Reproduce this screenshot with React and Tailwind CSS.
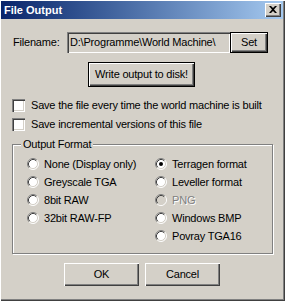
import React from "react";

const Radio = ({ checked, disabled }) => (
  <svg width="12" height="12" viewBox="0 0 12 12" className="shrink-0">
    <circle cx="6" cy="6" r="5" fill={disabled ? "#d4d0c8" : "#fff"} />
    <path d="M2.11 9.89A5.5 5.5 0 0 1 9.89 2.11" stroke="#808080" fill="none" />
    <path d="M9.89 2.11A5.5 5.5 0 0 1 2.11 9.89" stroke="#fff" fill="none" />
    <path d="M2.82 9.18A4.5 4.5 0 0 1 9.18 2.82" stroke="#404040" fill="none" />
    <path d="M9.18 2.82A4.5 4.5 0 0 1 2.82 9.18" stroke="#d4d0c8" fill="none" />
    {checked && <circle cx="6" cy="6" r="2" fill="#000" />}
  </svg>
);

const RadioItem = ({ label, checked, disabled }) => (
  <div className="flex h-[18px] items-center gap-[5px]">
    <Radio checked={checked} disabled={disabled} />
    <span
      className={
        disabled
          ? "text-[#808080] [text-shadow:1px_1px_0_#fff]"
          : "text-black"
      }
    >
      {label}
    </span>
  </div>
);

const Checkbox = ({ label }) => (
  <div className="flex h-[13px] items-center gap-[6px]">
    <div className="h-[13px] w-[13px] shrink-0 bg-white shadow-[inset_1px_1px_0_#808080,inset_2px_2px_0_#404040,inset_-1px_-1px_0_#ffffff,inset_-2px_-2px_0_#d4d0c8]" />
    <span>{label}</span>
  </div>
);

export default function App() {
  return (
    <div className="relative flex h-[301px] w-[285px] flex-col bg-[#d4d0c8] font-['Liberation_Sans',Arial,sans-serif] text-[11px] tracking-[-0.2px] text-black shadow-[inset_1px_1px_0_#ffffff,inset_-1px_-1px_0_#404040,inset_-2px_-2px_0_#808080]">
      {/* Title bar */}
      <div className="ml-[1px] mr-[2px] mt-[1px] flex h-[18px] items-center justify-between bg-gradient-to-r from-[#0a246a] to-[#a6caf0] pl-[3px] pr-[2px]">
        <span className="text-[11px] font-bold tracking-normal text-white">File Output</span>
        <div className="flex h-[14px] w-[16px] items-center justify-center bg-[#d4d0c8] shadow-[inset_1px_1px_0_#ffffff,inset_-1px_-1px_0_#404040,inset_-2px_-2px_0_#808080]">
          <svg width="8" height="7" viewBox="0 0 8 7" className="mt-[-1px]">
            <path d="M0 0h2l2 2 2-2h2L5 3.5 8 7H6L4 5 2 7H0l3-3.5z" fill="#000" />
          </svg>
        </div>
      </div>

      {/* Filename row */}
      <div className="mt-[13px] flex items-center pl-[13px]">
        <span className="w-[54px]">Filename:</span>
        <div className="flex h-[21px] w-[163px] items-center overflow-hidden whitespace-nowrap bg-[#d4d0c8] pl-[3px] shadow-[inset_1px_1px_0_#808080,inset_2px_2px_0_#404040,inset_-1px_-1px_0_#ffffff,inset_-2px_-2px_0_#d4d0c8]">
          D:\Programme\World Machine\
        </div>
        <div className="flex h-[21px] w-[38px] items-center justify-center border border-black bg-[#d4d0c8] shadow-[inset_1px_1px_0_#ffffff,inset_-1px_-1px_0_#404040,inset_-2px_-2px_0_#808080]">
          Set
        </div>
      </div>

      {/* Write button */}
      <div className="mt-[9px] pl-[88px]">
        <div className="flex h-[25px] w-[107px] items-center justify-center border border-black bg-[#d4d0c8] shadow-[inset_1px_1px_0_#ffffff,inset_-1px_-1px_0_#404040,inset_-2px_-2px_0_#808080]">
          Write output to disk!
        </div>
      </div>

      {/* Checkboxes */}
      <div className="mt-[12px] flex flex-col gap-[6px] pl-[12px]">
        <Checkbox label="Save the file every time the world machine is built" />
        <Checkbox label="Save incremental versions of this file" />
      </div>

      {/* Group box */}
      <div className="relative ml-[12px] mt-[13px] w-[261px] border border-[#808080] shadow-[inset_1px_1px_0_#ffffff,1px_1px_0_#ffffff]">
        <span className="absolute left-[8px] top-[-8px] bg-[#d4d0c8] px-[2px] leading-[14px]">
          Output Format
        </span>
        <div className="grid grid-cols-[128px_1fr] pb-[8px] pl-[14px] pt-[10px]">
          <div className="flex flex-col">
            <RadioItem label="None (Display only)" />
            <RadioItem label="Greyscale TGA" />
            <RadioItem label="8bit RAW" />
            <RadioItem label="32bit RAW-FP" />
          </div>
          <div className="flex flex-col">
            <RadioItem label="Terragen format" checked />
            <RadioItem label="Leveller format" />
            <RadioItem label="PNG" disabled />
            <RadioItem label="Windows BMP" />
            <RadioItem label="Povray TGA16" />
          </div>
        </div>
      </div>

      {/* OK / Cancel */}
      <div className="mt-[9px] flex gap-[6px] pl-[64px]">
        <div className="flex h-[23px] w-[75px] items-center justify-center bg-[#d4d0c8] shadow-[inset_1px_1px_0_#ffffff,inset_-1px_-1px_0_#404040,inset_-2px_-2px_0_#808080]">
          OK
        </div>
        <div className="flex h-[23px] w-[75px] items-center justify-center bg-[#d4d0c8] shadow-[inset_1px_1px_0_#ffffff,inset_-1px_-1px_0_#404040,inset_-2px_-2px_0_#808080]">
          Cancel
        </div>
      </div>
    </div>
  );
}
